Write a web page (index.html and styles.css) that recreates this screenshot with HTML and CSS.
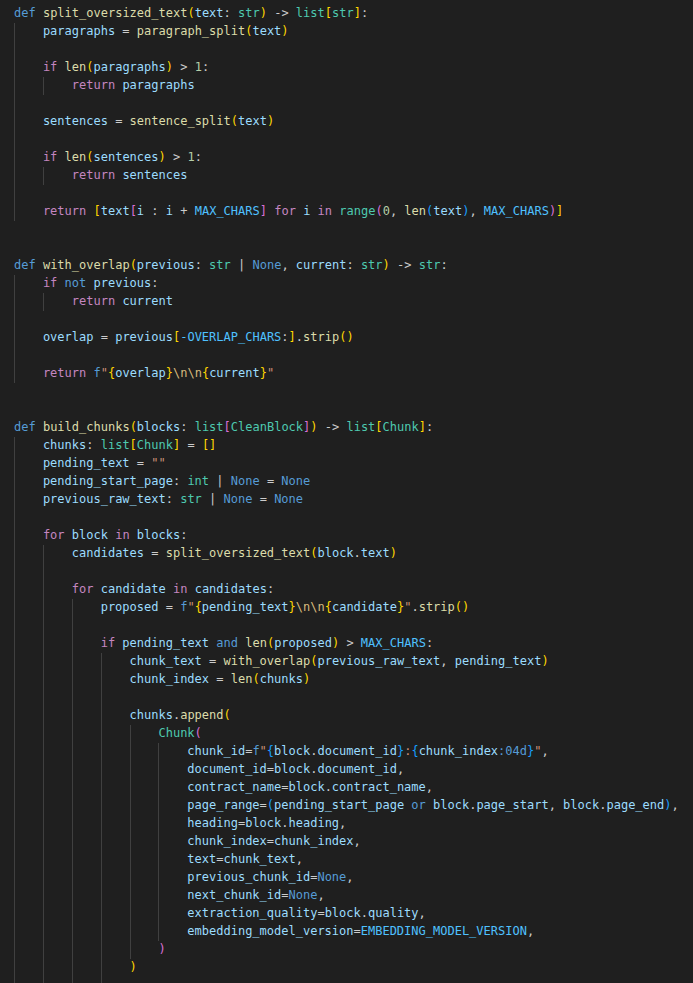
FILE: index.html
```html
<!DOCTYPE html>
<html>
<head>
<meta charset="utf-8">
<link rel="stylesheet" href="styles.css">
</head>
<body>
<div class="editor">
<div class="ln"><span class="code"><span class="k">def</span> <span class="f">split_oversized_text</span><span class="b1">(</span><span class="v">text</span>: <span class="t">str</span><span class="b1">)</span> -&gt; <span class="t">list</span><span class="b1">[</span><span class="t">str</span><span class="b1">]</span>:</span></div>
<div class="ln"><span class="g"></span><span class="code"><span class="v">paragraphs</span> = <span class="f">paragraph_split</span><span class="b1">(</span><span class="v">text</span><span class="b1">)</span></span></div>
<div class="ln"><span class="g"></span></div>
<div class="ln"><span class="g"></span><span class="code"><span class="c">if</span> <span class="f">len</span><span class="b1">(</span><span class="v">paragraphs</span><span class="b1">)</span> &gt; <span class="n">1</span>:</span></div>
<div class="ln"><span class="g"></span><span class="g"></span><span class="code"><span class="c">return</span> <span class="v">paragraphs</span></span></div>
<div class="ln"><span class="g"></span></div>
<div class="ln"><span class="g"></span><span class="code"><span class="v">sentences</span> = <span class="f">sentence_split</span><span class="b1">(</span><span class="v">text</span><span class="b1">)</span></span></div>
<div class="ln"><span class="g"></span></div>
<div class="ln"><span class="g"></span><span class="code"><span class="c">if</span> <span class="f">len</span><span class="b1">(</span><span class="v">sentences</span><span class="b1">)</span> &gt; <span class="n">1</span>:</span></div>
<div class="ln"><span class="g"></span><span class="g"></span><span class="code"><span class="c">return</span> <span class="v">sentences</span></span></div>
<div class="ln"><span class="g"></span></div>
<div class="ln"><span class="g"></span><span class="code"><span class="c">return</span> <span class="b1">[</span><span class="v">text</span><span class="b2">[</span><span class="v">i</span> : <span class="v">i</span> + <span class="m">MAX_CHARS</span><span class="b2">]</span> <span class="c">for</span> <span class="v">i</span> <span class="c">in</span> <span class="t">range</span><span class="b2">(</span><span class="n">0</span>, <span class="f">len</span><span class="b3">(</span><span class="v">text</span><span class="b3">)</span>, <span class="m">MAX_CHARS</span><span class="b2">)</span><span class="b1">]</span></span></div>
<div class="ln"></div>
<div class="ln"></div>
<div class="ln"><span class="code"><span class="k">def</span> <span class="f">with_overlap</span><span class="b1">(</span><span class="v">previous</span>: <span class="t">str</span> | <span class="k">None</span>, <span class="v">current</span>: <span class="t">str</span><span class="b1">)</span> -&gt; <span class="t">str</span>:</span></div>
<div class="ln"><span class="g"></span><span class="code"><span class="c">if</span> <span class="k">not</span> <span class="v">previous</span>:</span></div>
<div class="ln"><span class="g"></span><span class="g"></span><span class="code"><span class="c">return</span> <span class="v">current</span></span></div>
<div class="ln"><span class="g"></span></div>
<div class="ln"><span class="g"></span><span class="code"><span class="v">overlap</span> = <span class="v">previous</span><span class="b1">[</span><span class="m">-OVERLAP_CHARS</span>:<span class="b1">]</span>.<span class="f">strip</span><span class="b1">()</span></span></div>
<div class="ln"><span class="g"></span></div>
<div class="ln"><span class="g"></span><span class="code"><span class="c">return</span> <span class="k">f</span><span class="s">"</span><span class="b1">{</span><span class="v">overlap</span><span class="b1">}</span><span class="e">\n\n</span><span class="b1">{</span><span class="v">current</span><span class="b1">}</span><span class="s">"</span></span></div>
<div class="ln"></div>
<div class="ln"></div>
<div class="ln"><span class="code"><span class="k">def</span> <span class="f">build_chunks</span><span class="b1">(</span><span class="v">blocks</span>: <span class="t">list</span><span class="b2">[</span><span class="t">CleanBlock</span><span class="b2">]</span><span class="b1">)</span> -&gt; <span class="t">list</span><span class="b1">[</span><span class="t">Chunk</span><span class="b1">]</span>:</span></div>
<div class="ln"><span class="g"></span><span class="code"><span class="v">chunks</span>: <span class="t">list</span><span class="b1">[</span><span class="t">Chunk</span><span class="b1">]</span> = <span class="b1">[]</span></span></div>
<div class="ln"><span class="g"></span><span class="code"><span class="v">pending_text</span> = <span class="s">""</span></span></div>
<div class="ln"><span class="g"></span><span class="code"><span class="v">pending_start_page</span>: <span class="t">int</span> | <span class="k">None</span> = <span class="k">None</span></span></div>
<div class="ln"><span class="g"></span><span class="code"><span class="v">previous_raw_text</span>: <span class="t">str</span> | <span class="k">None</span> = <span class="k">None</span></span></div>
<div class="ln"><span class="g"></span></div>
<div class="ln"><span class="g"></span><span class="code"><span class="c">for</span> <span class="v">block</span> <span class="c">in</span> <span class="v">blocks</span>:</span></div>
<div class="ln"><span class="g"></span><span class="g"></span><span class="code"><span class="v">candidates</span> = <span class="f">split_oversized_text</span><span class="b1">(</span><span class="v">block</span>.<span class="v">text</span><span class="b1">)</span></span></div>
<div class="ln"><span class="g"></span><span class="g"></span></div>
<div class="ln"><span class="g"></span><span class="g"></span><span class="code"><span class="c">for</span> <span class="v">candidate</span> <span class="c">in</span> <span class="v">candidates</span>:</span></div>
<div class="ln"><span class="g"></span><span class="g"></span><span class="g"></span><span class="code"><span class="v">proposed</span> = <span class="k">f</span><span class="s">"</span><span class="b1">{</span><span class="v">pending_text</span><span class="b1">}</span><span class="e">\n\n</span><span class="b1">{</span><span class="v">candidate</span><span class="b1">}</span><span class="s">"</span>.<span class="f">strip</span><span class="b1">()</span></span></div>
<div class="ln"><span class="g"></span><span class="g"></span><span class="g"></span></div>
<div class="ln"><span class="g"></span><span class="g"></span><span class="g"></span><span class="code"><span class="c">if</span> <span class="v">pending_text</span> <span class="k">and</span> <span class="f">len</span><span class="b1">(</span><span class="v">proposed</span><span class="b1">)</span> &gt; <span class="m">MAX_CHARS</span>:</span></div>
<div class="ln"><span class="g"></span><span class="g"></span><span class="g"></span><span class="g"></span><span class="code"><span class="v">chunk_text</span> = <span class="f">with_overlap</span><span class="b1">(</span><span class="v">previous_raw_text</span>, <span class="v">pending_text</span><span class="b1">)</span></span></div>
<div class="ln"><span class="g"></span><span class="g"></span><span class="g"></span><span class="g"></span><span class="code"><span class="v">chunk_index</span> = <span class="f">len</span><span class="b1">(</span><span class="v">chunks</span><span class="b1">)</span></span></div>
<div class="ln"><span class="g"></span><span class="g"></span><span class="g"></span><span class="g"></span></div>
<div class="ln"><span class="g"></span><span class="g"></span><span class="g"></span><span class="g"></span><span class="code"><span class="v">chunks</span>.<span class="f">append</span><span class="b1">(</span></span></div>
<div class="ln"><span class="g"></span><span class="g"></span><span class="g"></span><span class="g"></span><span class="g"></span><span class="code"><span class="t">Chunk</span><span class="b2">(</span></span></div>
<div class="ln"><span class="g"></span><span class="g"></span><span class="g"></span><span class="g"></span><span class="g"></span><span class="g"></span><span class="code"><span class="v">chunk_id</span>=<span class="k">f</span><span class="s">"</span><span class="b3">{</span><span class="v">block</span>.<span class="v">document_id</span><span class="b3">}</span><span class="s">:</span><span class="b3">{</span><span class="v">chunk_index</span><span class="k">:04d</span><span class="b3">}</span><span class="s">"</span>,</span></div>
<div class="ln"><span class="g"></span><span class="g"></span><span class="g"></span><span class="g"></span><span class="g"></span><span class="g"></span><span class="code"><span class="v">document_id</span>=<span class="v">block</span>.<span class="v">document_id</span>,</span></div>
<div class="ln"><span class="g"></span><span class="g"></span><span class="g"></span><span class="g"></span><span class="g"></span><span class="g"></span><span class="code"><span class="v">contract_name</span>=<span class="v">block</span>.<span class="v">contract_name</span>,</span></div>
<div class="ln"><span class="g"></span><span class="g"></span><span class="g"></span><span class="g"></span><span class="g"></span><span class="g"></span><span class="code"><span class="v">page_range</span>=<span class="b3">(</span><span class="v">pending_start_page</span> <span class="k">or</span> <span class="v">block</span>.<span class="v">page_start</span>, <span class="v">block</span>.<span class="v">page_end</span><span class="b3">)</span>,</span></div>
<div class="ln"><span class="g"></span><span class="g"></span><span class="g"></span><span class="g"></span><span class="g"></span><span class="g"></span><span class="code"><span class="v">heading</span>=<span class="v">block</span>.<span class="v">heading</span>,</span></div>
<div class="ln"><span class="g"></span><span class="g"></span><span class="g"></span><span class="g"></span><span class="g"></span><span class="g"></span><span class="code"><span class="v">chunk_index</span>=<span class="v">chunk_index</span>,</span></div>
<div class="ln"><span class="g"></span><span class="g"></span><span class="g"></span><span class="g"></span><span class="g"></span><span class="g"></span><span class="code"><span class="v">text</span>=<span class="v">chunk_text</span>,</span></div>
<div class="ln"><span class="g"></span><span class="g"></span><span class="g"></span><span class="g"></span><span class="g"></span><span class="g"></span><span class="code"><span class="v">previous_chunk_id</span>=<span class="k">None</span>,</span></div>
<div class="ln"><span class="g"></span><span class="g"></span><span class="g"></span><span class="g"></span><span class="g"></span><span class="g"></span><span class="code"><span class="v">next_chunk_id</span>=<span class="k">None</span>,</span></div>
<div class="ln"><span class="g"></span><span class="g"></span><span class="g"></span><span class="g"></span><span class="g"></span><span class="g"></span><span class="code"><span class="v">extraction_quality</span>=<span class="v">block</span>.<span class="v">quality</span>,</span></div>
<div class="ln"><span class="g"></span><span class="g"></span><span class="g"></span><span class="g"></span><span class="g"></span><span class="g"></span><span class="code"><span class="v">embedding_model_version</span>=<span class="m">EMBEDDING_MODEL_VERSION</span>,</span></div>
<div class="ln"><span class="g"></span><span class="g"></span><span class="g"></span><span class="g"></span><span class="g"></span><span class="code"><span class="b2">)</span></span></div>
<div class="ln"><span class="g"></span><span class="g"></span><span class="g"></span><span class="g"></span><span class="code"><span class="b1">)</span></span></div>
<div class="ln"><span class="g"></span><span class="g"></span><span class="g"></span><span class="g"></span></div>
</div>
</body>
</html>
```
FILE: styles.css
```css
html, body {
  margin: 0;
  padding: 0;
  height: 100%;
  overflow: hidden;
  background: #1f1f1f;
}
.editor {
  padding: 5px 0 0 14px;
  font-family: "DejaVu Sans Mono", "Liberation Mono", monospace;
  font-size: 12px;
  color: #cccccc;
}
.ln {
  display: flex;
  height: 18px;
  line-height: 18px;
  white-space: pre;
}
.g {
  flex: 0 0 4ch;
  width: 4ch;
  height: 18px;
  box-shadow: inset 1px 0 0 #404040;
}
.code {
  position: relative;
  top: -1px;
}
.k { color: #569cd6; }
.c { color: #c586c0; }
.f { color: #dcdcaa; }
.v { color: #9cdcfe; }
.t { color: #4ec9b0; }
.n { color: #b5cea8; }
.s { color: #ce9178; }
.e { color: #d7ba7d; }
.m { color: #4fc1ff; }
.b1 { color: #ffd700; }
.b2 { color: #da70d6; }
.b3 { color: #179fff; }
```
